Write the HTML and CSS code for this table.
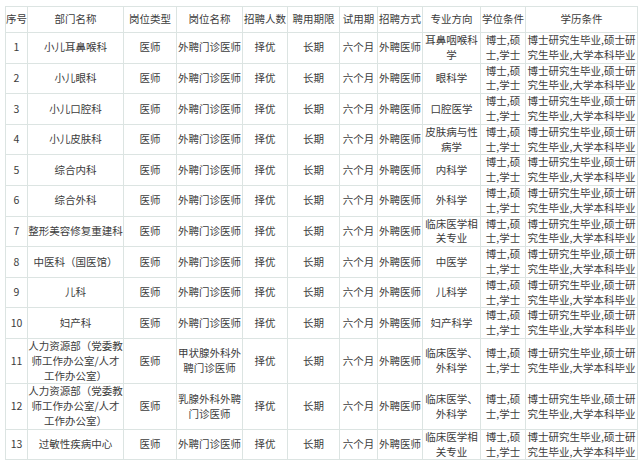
FILE: index.html
```html
<!DOCTYPE html>
<html lang="zh">
<head>
<meta charset="utf-8">
<link rel="stylesheet" href="styles.css">
</head>
<body>
<table class="jobs">
  <colgroup>
    <col class="c-no"><col class="c-dept"><col class="c-type"><col class="c-pos"><col class="c-num"><col class="c-term"><col class="c-trial"><col class="c-way"><col class="c-major"><col class="c-degree"><col class="c-edu">
  </colgroup>
  <thead>
    <tr><th>序号</th><th>部门名称</th><th>岗位类型</th><th>岗位名称</th><th>招聘人数</th><th>聘用期限</th><th>试用期</th><th>招聘方式</th><th>专业方向</th><th>学位条件</th><th>学历条件</th></tr>
  </thead>
  <tbody>
    <tr><td>1</td><td>小儿耳鼻喉科</td><td>医师</td><td>外聘门诊医师</td><td>择优</td><td>长期</td><td>六个月</td><td>外聘医师</td><td>耳鼻咽喉科学</td><td class="deg">博士,硕士,学士</td><td class="edu">博士研究生毕业,硕士研究生毕业,大学本科毕业</td></tr>
    <tr><td>2</td><td>小儿眼科</td><td>医师</td><td>外聘门诊医师</td><td>择优</td><td>长期</td><td>六个月</td><td>外聘医师</td><td>眼科学</td><td class="deg">博士,硕士,学士</td><td class="edu">博士研究生毕业,硕士研究生毕业,大学本科毕业</td></tr>
    <tr><td>3</td><td>小儿口腔科</td><td>医师</td><td>外聘门诊医师</td><td>择优</td><td>长期</td><td>六个月</td><td>外聘医师</td><td>口腔医学</td><td class="deg">博士,硕士,学士</td><td class="edu">博士研究生毕业,硕士研究生毕业,大学本科毕业</td></tr>
    <tr><td>4</td><td>小儿皮肤科</td><td>医师</td><td>外聘门诊医师</td><td>择优</td><td>长期</td><td>六个月</td><td>外聘医师</td><td>皮肤病与性病学</td><td class="deg">博士,硕士,学士</td><td class="edu">博士研究生毕业,硕士研究生毕业,大学本科毕业</td></tr>
    <tr><td>5</td><td>综合内科</td><td>医师</td><td>外聘门诊医师</td><td>择优</td><td>长期</td><td>六个月</td><td>外聘医师</td><td>内科学</td><td class="deg">博士,硕士,学士</td><td class="edu">博士研究生毕业,硕士研究生毕业,大学本科毕业</td></tr>
    <tr><td>6</td><td>综合外科</td><td>医师</td><td>外聘门诊医师</td><td>择优</td><td>长期</td><td>六个月</td><td>外聘医师</td><td>外科学</td><td class="deg">博士,硕士,学士</td><td class="edu">博士研究生毕业,硕士研究生毕业,大学本科毕业</td></tr>
    <tr><td>7</td><td>整形美容修复重建科</td><td>医师</td><td>外聘门诊医师</td><td>择优</td><td>长期</td><td>六个月</td><td>外聘医师</td><td>临床医学相关专业</td><td class="deg">博士,硕士,学士</td><td class="edu">博士研究生毕业,硕士研究生毕业,大学本科毕业</td></tr>
    <tr><td>8</td><td>中医科（国医馆）</td><td>医师</td><td>外聘门诊医师</td><td>择优</td><td>长期</td><td>六个月</td><td>外聘医师</td><td>中医学</td><td class="deg">博士,硕士,学士</td><td class="edu">博士研究生毕业,硕士研究生毕业,大学本科毕业</td></tr>
    <tr><td>9</td><td>儿科</td><td>医师</td><td>外聘门诊医师</td><td>择优</td><td>长期</td><td>六个月</td><td>外聘医师</td><td>儿科学</td><td class="deg">博士,硕士,学士</td><td class="edu">博士研究生毕业,硕士研究生毕业,大学本科毕业</td></tr>
    <tr><td>10</td><td>妇产科</td><td>医师</td><td>外聘门诊医师</td><td>择优</td><td>长期</td><td>六个月</td><td>外聘医师</td><td>妇产科学</td><td class="deg">博士,硕士,学士</td><td class="edu">博士研究生毕业,硕士研究生毕业,大学本科毕业</td></tr>
    <tr><td>11</td><td>人力资源部（党委教师工作办公室/人才工作办公室）</td><td>医师</td><td>甲状腺外科外聘门诊医师</td><td>择优</td><td>长期</td><td>六个月</td><td>外聘医师</td><td>临床医学、外科学</td><td class="deg">博士,硕士,学士</td><td class="edu">博士研究生毕业,硕士研究生毕业,大学本科毕业</td></tr>
    <tr><td>12</td><td>人力资源部（党委教师工作办公室/人才工作办公室）</td><td>医师</td><td>乳腺外科外聘门诊医师</td><td>择优</td><td>长期</td><td>六个月</td><td>外聘医师</td><td>临床医学、外科学</td><td class="deg">博士,硕士,学士</td><td class="edu">博士研究生毕业,硕士研究生毕业,大学本科毕业</td></tr>
    <tr><td>13</td><td>过敏性疾病中心</td><td>医师</td><td>外聘门诊医师</td><td>择优</td><td>长期</td><td>六个月</td><td>外聘医师</td><td>临床医学相关专业</td><td class="deg">博士,硕士,学士</td><td class="edu">博士研究生毕业,硕士研究生毕业,大学本科毕业</td></tr>
  </tbody>
</table>
</body>
</html>
```

FILE: styles.css
```css
html, body {
  margin: 0;
  padding: 0;
  background: #ffffff;
}

body {
  padding: 6px 0 0 5px;
  font-family: "Noto Sans CJK SC", "Noto Sans", sans-serif;
  font-size: 10.5px;
  color: #3c3c3c;
}

.jobs {
  border-collapse: collapse;
  table-layout: fixed;
  width: 632px;
}

.jobs th,
.jobs td {
  border: 1px solid #dce4e2;
  padding: 0;
  text-align: center;
  vertical-align: middle;
  line-height: 14.8px;
  font-weight: normal;
  word-break: break-all;
}

.jobs th {
  height: 25px;
}

.jobs td.deg {
  padding: 0 2px;
}

.c-no { width: 22px; }
.c-dept { width: 96px; }
.c-type { width: 53px; }
.c-pos { width: 66px; }
.c-num { width: 45px; }
.c-term { width: 52px; }
.c-trial { width: 38px; }
.c-way { width: 45px; }
.c-major { width: 58px; }
.c-degree { width: 45px; }
.c-edu { width: 112px; }
```
